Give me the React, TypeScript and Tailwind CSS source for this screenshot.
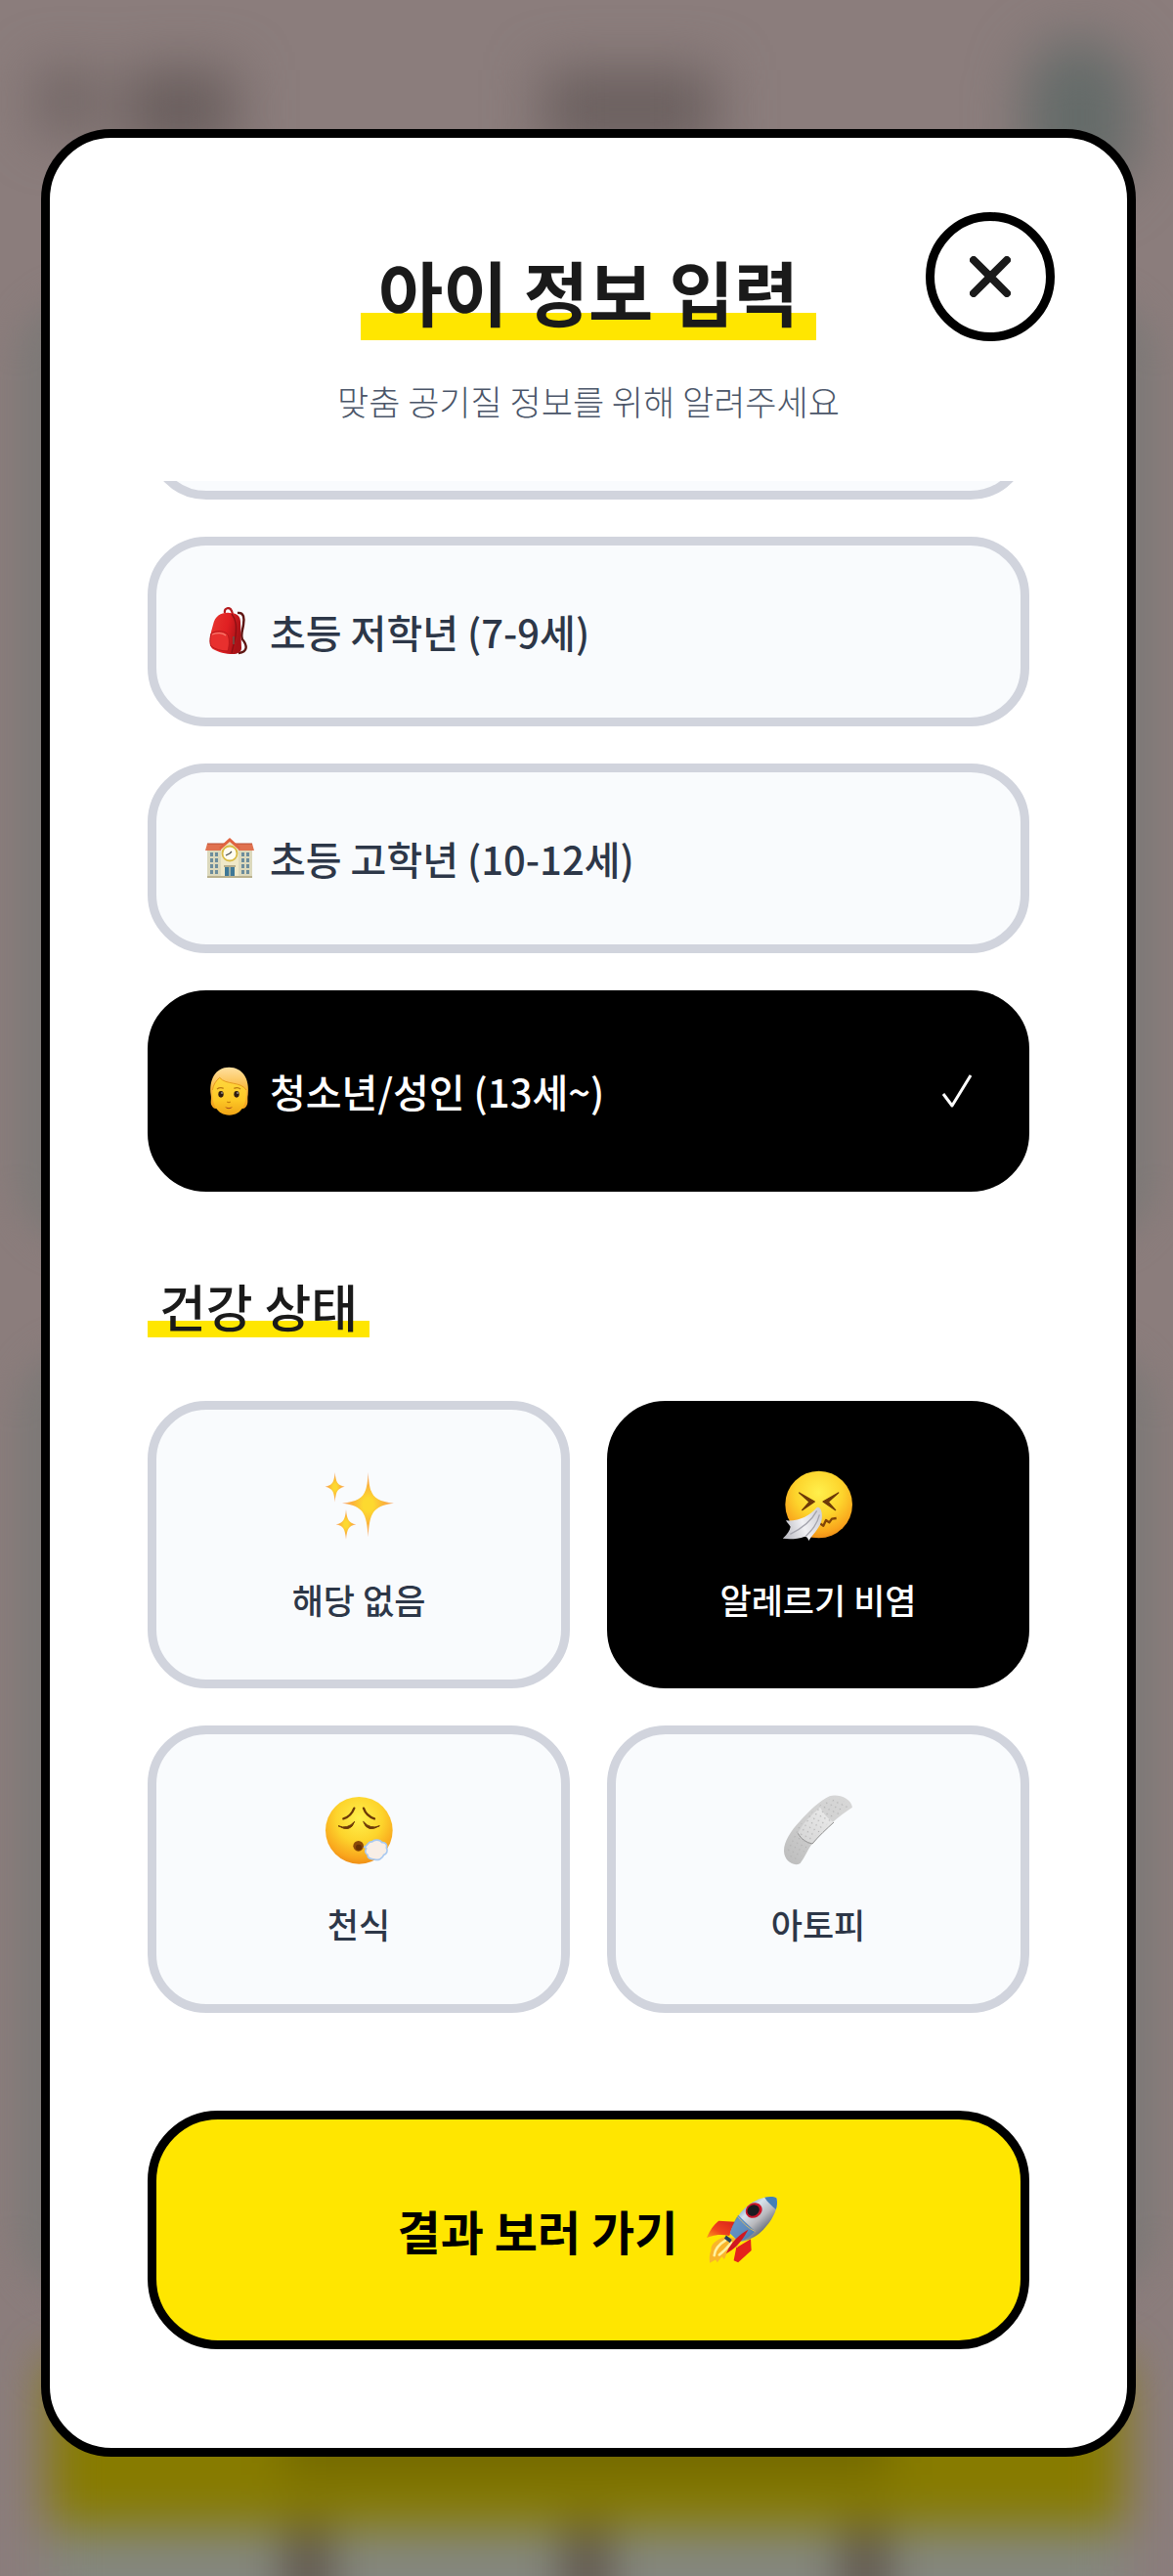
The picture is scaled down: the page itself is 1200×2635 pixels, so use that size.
import React, { useLayoutEffect, useRef, useState } from 'react';
import { clsx } from 'clsx';

interface IconProps {
  className?: string;
}

const BackpackIcon: React.FC<IconProps> = ({ className }) => (
  <svg viewBox="0 0 50 50" className={className} aria-hidden="true">
    <defs>
      <linearGradient id="bag" x1="0" y1="0" x2="1" y2="0.3">
        <stop offset="0" stopColor="#e8372f" />
        <stop offset="0.6" stopColor="#e01f22" />
        <stop offset="1" stopColor="#a81217" />
      </linearGradient>
    </defs>
    <path d="M33 6c7-1 7 6 6 12-1 7-3 10-1 15 5 6 6 13-4 14" fill="none" stroke="#5e1512" strokeWidth="2.4" />
    <path d="M20 6c-1-5 5-7 7-2l1 3" fill="none" stroke="#b3191c" strokeWidth="2.2" />
    <path d="M8 18C10 8 18 5 25 6c7 0 11 3 11 9l1 27c0 4-4 6-9 6-7 0-15-2-20-5-3-2-3-5-3-8 0-7 1-10 3-17z" fill="url(#bag)" />
    <path d="M27 7c5 6 5 13 4 23l-4 17" fill="none" stroke="#8d1014" strokeWidth="1.4" />
    <path d="M6 27c5-3 12-3 16 0 3 3 3 12 1 18-7 0-13-2-17-5-2-4-1-9 0-13z" fill="#e8302e" stroke="#b8181b" strokeWidth="1" />
    <path d="M7 28c5-2 11-2 14 1" fill="none" stroke="#f8796c" strokeWidth="1.2" />
    <path d="M29 30v8" stroke="#6f5148" strokeWidth="1.6" />
  </svg>
);

const SchoolIcon: React.FC<IconProps> = ({ className }) => (
  <svg viewBox="0 0 50 50" className={className} aria-hidden="true">
    <path d="M2 16h46v28H2z" fill="#dcd9bd" />
    <path d="M2 10h46l2 7H0z" fill="#e0714f" />
    <path d="M2 10h46" stroke="#b94f35" strokeWidth="1" />
    <path d="M16 14l9-8 9 8v30H16z" fill="#efe8c8" />
    <path d="M14 14L25 4l11 10-2 2-9-8-9 8z" fill="#e0633f" />
    {[19, 25, 31, 37].map((y) => (
      <g key={y} fill="#6d8d9c">
        <path d={`M5 ${y}h3v4H5zM10 ${y}h3v4h-3z`} />
        <path d={`M37 ${y}h3v4h-3zM42 ${y}h3v4h-3z`} />
      </g>
    ))}
    <circle cx="25" cy="20" r="7.5" fill="#fffdf2" stroke="#d9bb45" strokeWidth="1.8" />
    <path d="M25 20l-4 2M25 20l2-2" stroke="#4a4a4a" strokeWidth="1.2" />
    <path d="M19 32h12v2H19z" fill="#b7ae8b" />
    <path d="M20 34h10v10H20z" fill="#3f7896" />
    <path d="M25 34v10" stroke="#dfd8b2" strokeWidth="1.2" />
    <path d="M2 43h46v2H2z" fill="#b9b08d" />
  </svg>
);

const PersonIcon: React.FC<IconProps> = ({ className }) => (
  <svg viewBox="20 26 150 150" className={className} aria-hidden="true">
    <defs>
      <linearGradient id="skin" x1="0" y1="0" x2="0" y2="1">
        <stop offset="0" stopColor="#ffd83f" />
        <stop offset="0.6" stopColor="#fdc825" />
        <stop offset="1" stopColor="#f0a416" />
      </linearGradient>
      <linearGradient id="hair" x1="0" y1="0" x2="0" y2="1">
        <stop offset="0" stopColor="#ffe0a0" />
        <stop offset="0.5" stopColor="#fbbb42" />
        <stop offset="1" stopColor="#f0a018" />
      </linearGradient>
    </defs>
    <path d="M40 146c-6-10 0-20-3-34-6-46 14-84 56-84s64 36 58 84c-3 14 2 24-4 34-4 8-10 10-14 8H54c-4 2-10 0-14-8z" fill="url(#hair)" />
    <path d="M43 96c2-16 10-28 22-36 18 22 62 12 80 36 4 44-12 79-51 79S38 140 43 96z" fill="url(#skin)" />
    <path d="M64 60c20 24 64 10 82 38" fill="none" stroke="#e79b1f" strokeWidth="3" />
    <path d="M64 60C52 70 45 82 42 98" fill="none" stroke="#e79b1f" strokeWidth="3" />
    <ellipse cx="68" cy="111" rx="8" ry="10" fill="#2f1c10" />
    <ellipse cx="116" cy="111" rx="8" ry="10" fill="#2f1c10" />
    <circle cx="71" cy="107" r="2" fill="#fff" />
    <circle cx="119" cy="107" r="2" fill="#fff" />
    <path d="M56 95q10-7 20-2M108 93q12-5 20 2" fill="none" stroke="#b97812" strokeWidth="4" />
    <path d="M87 134q5 4 10 0" fill="none" stroke="#c57d0c" strokeWidth="4" />
    <path d="M80 150q12 5 24 0-12 12-24 0z" fill="#a84a1c" />
  </svg>
);

const SparklesIcon: React.FC<IconProps> = ({ className }) => (
  <svg viewBox="573 252 216 216" className={className} aria-hidden="true">
    <defs>
      <radialGradient id="spark">
        <stop offset="0.2" stopColor="#fdd92f" />
        <stop offset="0.6" stopColor="#fbb33b" />
        <stop offset="1" stopColor="#f9a878" />
      </radialGradient>
    </defs>
    <g fill="url(#spark)">
      <path d="M710 258c4 70 14 88 80 95-66 8-76 30-80 104-5-74-14-96-80-104 66-7 76-25 80-95z" />
      <path d="M608 258c3 32 8 40 30 44-22 5-27 14-30 48-3-34-8-43-30-48 22-4 27-12 30-44z" />
      <path d="M642 372c3 32 8 41 31 46-23 5-28 14-31 46-3-32-8-41-31-46 23-5 28-14 31-46z" />
    </g>
  </svg>
);

const FaceGradient: React.FC<{ id: string }> = ({ id }) => (
  <radialGradient id={id} cx="0.5" cy="0.32" r="0.7">
    <stop offset="0" stopColor="#fff04c" />
    <stop offset="0.5" stopColor="#fdd42c" />
    <stop offset="0.85" stopColor="#f9a51c" />
    <stop offset="1" stopColor="#ec8a16" />
  </radialGradient>
);

const SneezeIcon: React.FC<IconProps> = ({ className }) => (
  <svg viewBox="602 252 216 216" className={className} aria-hidden="true">
    <defs>
      <FaceGradient id="sneeze" />
      <linearGradient id="tissue" x1="0" y1="0.6" x2="1" y2="0.3">
        <stop offset="0" stopColor="#bdbdc4" />
        <stop offset="0.5" stopColor="#f1f1f4" />
        <stop offset="1" stopColor="#d0d0d6" />
      </linearGradient>
    </defs>
    <circle cx="712" cy="357" r="103" fill="url(#sneeze)" />
    <path d="M652 321l47 27-38 26 22-25zM772 321l-47 27 38 26-22-25z" fill="#6d3a08" stroke="#6d3a08" strokeWidth="4" strokeLinejoin="round" />
    <path d="M714 414l12 8 8-17 10 7 8-11 14-2" fill="none" stroke="#804407" strokeWidth="7" strokeLinejoin="round" />
    <path d="M706 366c12-4 18 16 15 36-3 24-24 42-40 66-3-10-6-12-12-13-22 8-48 9-68 6 14-12 22-24 24-36-4-6-10-12-14-19 44 2 72-14 95-40z" fill="url(#tissue)" />
    <path d="M706 376c-18 34-46 54-82 72M714 388c-8 34-28 52-42 66" fill="none" stroke="#a5a5ae" strokeWidth="4" />
  </svg>
);

const ExhaleIcon: React.FC<IconProps> = ({ className }) => (
  <svg viewBox="573 254 216 216" className={className} aria-hidden="true">
    <defs>
      <FaceGradient id="exhale" />
    </defs>
    <circle cx="682" cy="363" r="103" fill="url(#exhale)" />
    <path d="M667 295q-10 26-33 32M696 295q8 24 33 32" fill="none" stroke="#6d3a08" strokeWidth="7" strokeLinecap="round" />
    <path d="M618 349q28 12 50-13-12 36-50 13zM745 349q-28 12-50-13 12 36 50 13z" fill="#6d3a08" stroke="#6d3a08" strokeWidth="3" strokeLinejoin="round" />
    <circle cx="680" cy="411" r="16" fill="#8a4a08" />
    <circle cx="681" cy="415" r="9" fill="#663205" />
    <path d="M698 414c10-2 10-18 24-16 6-8 24-8 30 2 10-2 18 8 14 16 6 10 0 20-8 22-4 12-18 18-28 14-12 0-22-4-22-14-8-4-8-14-4-20z" fill="#f8eee6" stroke="#a9c9f0" strokeWidth="5" strokeLinejoin="round" />
  </svg>
);

const BandageIcon: React.FC<IconProps> = ({ className }) => (
  <svg viewBox="600 256 216 216" className={className} aria-hidden="true">
    <defs>
      <linearGradient id="strip" x1="0" y1="1" x2="1" y2="0">
        <stop offset="0" stopColor="#bcbcbc" />
        <stop offset="0.5" stopColor="#d0d0d0" />
        <stop offset="1" stopColor="#d8d8d8" />
      </linearGradient>
      <linearGradient id="pad" x1="0" y1="1" x2="1" y2="0">
        <stop offset="0" stopColor="#d4d4d4" />
        <stop offset="1" stopColor="#ececec" />
      </linearGradient>
      <pattern id="dots" width="15" height="15" patternUnits="userSpaceOnUse" patternTransform="rotate(25)">
        <circle cx="4" cy="4" r="2.2" fill="#b0b0b0" />
      </pattern>
    </defs>
    <path d="M603 428c0-30 22-62 46-88 30-34 64-66 94-80 26-8 66 6 70 34-40 26-88 66-124 112-14 20-22 42-36 60-20 12-50-8-50-38z" fill="url(#strip)" />
    <path d="M646 374c14-32 40-54 68-80 10 18 22 34 42 46-22 20-44 42-66 66-18-4-34-16-44-32z" fill="url(#pad)" />
    <path d="M646 374c10 18 26 28 44 32 20-24 44-46 66-66" fill="none" stroke="#8f8f8f" strokeWidth="3" />
    <path d="M612 424c4-30 20-54 42-78 28-32 60-64 90-78 24-6 50 6 58 24-36 26-84 66-118 108-14 18-22 38-32 52-14 8-40-4-40-28z" fill="url(#dots)" />
  </svg>
);

const RocketIcon: React.FC<IconProps> = ({ className }) => (
  <svg viewBox="14 18 236 226" className={className} aria-hidden="true">
    <defs>
      <linearGradient id="hull" x1="0.2" y1="0.1" x2="0.8" y2="0.75">
        <stop offset="0" stopColor="#4b83bb" />
        <stop offset="0.35" stopColor="#d7e3ec" />
        <stop offset="0.65" stopColor="#b9b9bd" />
        <stop offset="1" stopColor="#58606e" />
      </linearGradient>
      <linearGradient id="fin" x1="1" y1="0" x2="0" y2="1">
        <stop offset="0" stopColor="#d8211b" />
        <stop offset="0.6" stopColor="#f0451c" />
        <stop offset="1" stopColor="#fca21a" />
      </linearGradient>
    </defs>
    <path d="M110 105L58 102C40 116 30 134 20 156c26-10 48-12 72-6z" fill="url(#fin)" />
    <path d="M160 160l2 36-42 38-14-6 8-40z" fill="#e4231c" />
    <path d="M82 152c-28 8-50 22-48 44-6 14-6 28-4 40l18-10 6 8 14-18 8 8 10-22 16-20 16 6 6-28z" fill="#f9b52b" />
    <path d="M80 164c-20 12-34 26-36 48M98 172c-12 14-22 26-38 38" fill="none" stroke="#fff2a0" strokeWidth="8" strokeLinecap="round" />
    <path d="M242 30c-42-12-88 14-114 46-12 16-24 36-34 66l28 26c34-2 58-18 78-38 30-32 50-70 42-100z" fill="url(#hull)" />
    <path d="M120 84l54 52c-18 18-34 28-52 32l-28-26c8-26 16-44 26-58z" fill="#3f79ba" opacity="0.75" />
    <path d="M118 88c16 20 34 38 56 48" fill="none" stroke="#d3b66a" strokeWidth="3" />
    <path d="M204 28c16-4 30-3 38 2 3 12 2 24-2 36-12-10-26-22-36-38z" fill="#447fb8" />
    <ellipse cx="170" cy="69" rx="27" ry="23" transform="rotate(-30 170 69)" fill="#c9162a" />
    <ellipse cx="168" cy="69" rx="20" ry="17" transform="rotate(-30 168 69)" fill="#1b1b20" />
    <path d="M152 130c-30 16-56 42-70 76 28-14 50-38 70-76z" fill="#cf1721" />
    <path d="M82 148l18 14-6 10-18-14z" fill="#23405a" />
  </svg>
);

const CheckMark: React.FC<IconProps> = ({ className }) => (
  <svg viewBox="0 0 30 34" className={className} aria-hidden="true">
    <path d="M1 20l9 12L29 1" fill="none" stroke="currentColor" strokeWidth="3" strokeLinejoin="round" />
  </svg>
);

const ages = [
  { id: 'toddler', label: '', icon: null },
  { id: 'lower', label: '초등 저학년 (7-9세)', icon: BackpackIcon },
  { id: 'upper', label: '초등 고학년 (10-12세)', icon: SchoolIcon },
  { id: 'teen', label: '청소년/성인 (13세~)', icon: PersonIcon },
];

const conditions = [
  { id: 'none', label: '해당 없음', icon: SparklesIcon },
  { id: 'rhinitis', label: '알레르기 비염', icon: SneezeIcon },
  { id: 'asthma', label: '천식', icon: ExhaleIcon },
  { id: 'atopy', label: '아토피', icon: BandageIcon },
];

const optionStyle = (selected: boolean) =>
  selected
    ? 'border-black bg-black text-white'
    : 'border-[#d1d4dd] bg-[#f9fbfd] text-[#2d3748]';

// Dimmed page that shows through behind the dialog
const Backdrop = () => (
  <div className="absolute inset-0 flex flex-col overflow-hidden bg-[#8b7d7c]" aria-hidden="true">
    <div className="flex h-[300px] shrink-0 items-start justify-between px-10 pt-10 blur-[28px]">
      <div className="flex gap-8 pt-8">
        <div className="h-16 w-14 bg-[#6c6160]" />
        <div className="h-20 w-28 bg-[#685d5c]" />
      </div>
      <div className="mt-8 h-20 w-44 bg-[#6a5f5e]" />
      <div className="h-40 w-28 rounded-full bg-[#646b69]" />
    </div>
    <div className="flex min-h-0 flex-1 flex-col gap-[100px] px-4 pb-16 blur-[16px]">
      <div className="flex-1 rounded-[72px] bg-[#7d7977]" />
      <div className="flex-1 rounded-[72px] bg-[#7d7977]" />
    </div>
    <div className="flex h-[220px] shrink-0 flex-col px-[50px] blur-[24px]">
      <div className="h-[170px] shrink-0 bg-[#877b00] px-[240px] pt-10">
        <div className="h-20 bg-[#736900]" />
      </div>
      <div className="flex h-24 shrink-0 gap-10 bg-[#574c44]">
        <div className="flex-1 bg-[#84877f]" />
        <div className="flex-1 bg-[#84877f]" />
        <div className="flex-1 bg-[#84877f]" />
        <div className="flex-1 bg-[#84877f]" />
      </div>
    </div>
  </div>
);

export default function App() {
  const [age, setAge] = useState('teen');
  const [condition, setCondition] = useState('rhinitis');
  const scrollRef = useRef<HTMLDivElement>(null);

  useLayoutEffect(() => {
    if (scrollRef.current) scrollRef.current.scrollTop = scrollRef.current.scrollHeight;
  }, []);

  return (
    <div className="relative h-screen overflow-hidden pt-[132px] pr-[38px] pb-[122px] pl-[42px] font-['Noto_Sans_CJK_KR',sans-serif]">
      <Backdrop />

      <div
        role="dialog"
        aria-labelledby="dialog-title"
        className="relative flex h-full flex-col overflow-hidden rounded-[72px] border-[9px] border-black bg-white"
      >
        <header className="flex flex-col items-center px-[100px] pt-[113px] pb-14">
          <h1
            id="dialog-title"
            className="bg-[linear-gradient(transparent_70%,#ffe600_70%)] px-[18px] pb-2 text-[72px] leading-[86px] font-bold text-[#1a1a1a]"
          >
            아이 정보 입력
          </h1>
          <p className="mt-9 text-[35px] leading-[52px] font-light text-[#4a5568]">
            맞춤 공기질 정보를 위해 알려주세요
          </p>
        </header>

        <button
          aria-label="닫기"
          className="absolute top-[76px] right-[74px] flex size-[132px] items-center justify-center rounded-full border-[9px] border-black bg-white"
        >
          <svg viewBox="0 0 42 42" className="size-[42px]" aria-hidden="true">
            <path d="M4 4l34 34M38 4L4 38" stroke="#1a1a1a" strokeWidth="8" strokeLinecap="round" />
          </svg>
        </button>

        <div ref={scrollRef} className="min-h-0 flex-1 overflow-y-auto px-[100px] pb-[101px] [scrollbar-width:none]">
          <div className="flex flex-col gap-[38px]">
            {ages.map(({ id, label, icon: Icon }) => (
              <button
                key={id}
                onClick={() => setAge(id)}
                aria-pressed={age === id}
                className={clsx(
                  'flex min-h-[194px] items-center rounded-[60px] border-[9px] px-[50px] py-[58px] text-left text-[40px] leading-[60px] font-medium',
                  optionStyle(age === id)
                )}
              >
                {Icon && <Icon className="mr-4 size-[50px]" />}
                <span>{label}</span>
                {age === id && (
                  <span className="ml-auto flex h-[72px] items-center">
                    <CheckMark className="h-[34px] w-[30px]" />
                  </span>
                )}
              </button>
            ))}
          </div>

          <h2 className="mt-[92px] w-fit bg-[linear-gradient(transparent_70%,#ffe600_70%)] px-3 pb-2 text-[52px] leading-[49px] font-medium text-[#1a1a1a]">
            건강 상태
          </h2>

          <div className="mt-[65px] grid grid-cols-2 gap-[38px]">
            {conditions.map(({ id, label, icon: Icon }) => (
              <button
                key={id}
                onClick={() => setCondition(id)}
                aria-pressed={condition === id}
                className={clsx(
                  'flex flex-col items-center gap-9 rounded-[60px] border-[9px] pt-[62px] pb-[58px] text-[35px] leading-[48px] font-medium',
                  optionStyle(condition === id)
                )}
              >
                <Icon className="size-[72px]" />
                <span>{label}</span>
              </button>
            ))}
          </div>

          <button className="mt-[100px] flex w-full items-center justify-center gap-7 rounded-[72px] border-[9px] border-black bg-[#ffe600] py-[75px] text-[48px] leading-[76px] font-bold text-black">
            <span>결과 보러 가기</span>
            <RocketIcon className="size-[76px]" />
          </button>
        </div>
      </div>
    </div>
  );
}
